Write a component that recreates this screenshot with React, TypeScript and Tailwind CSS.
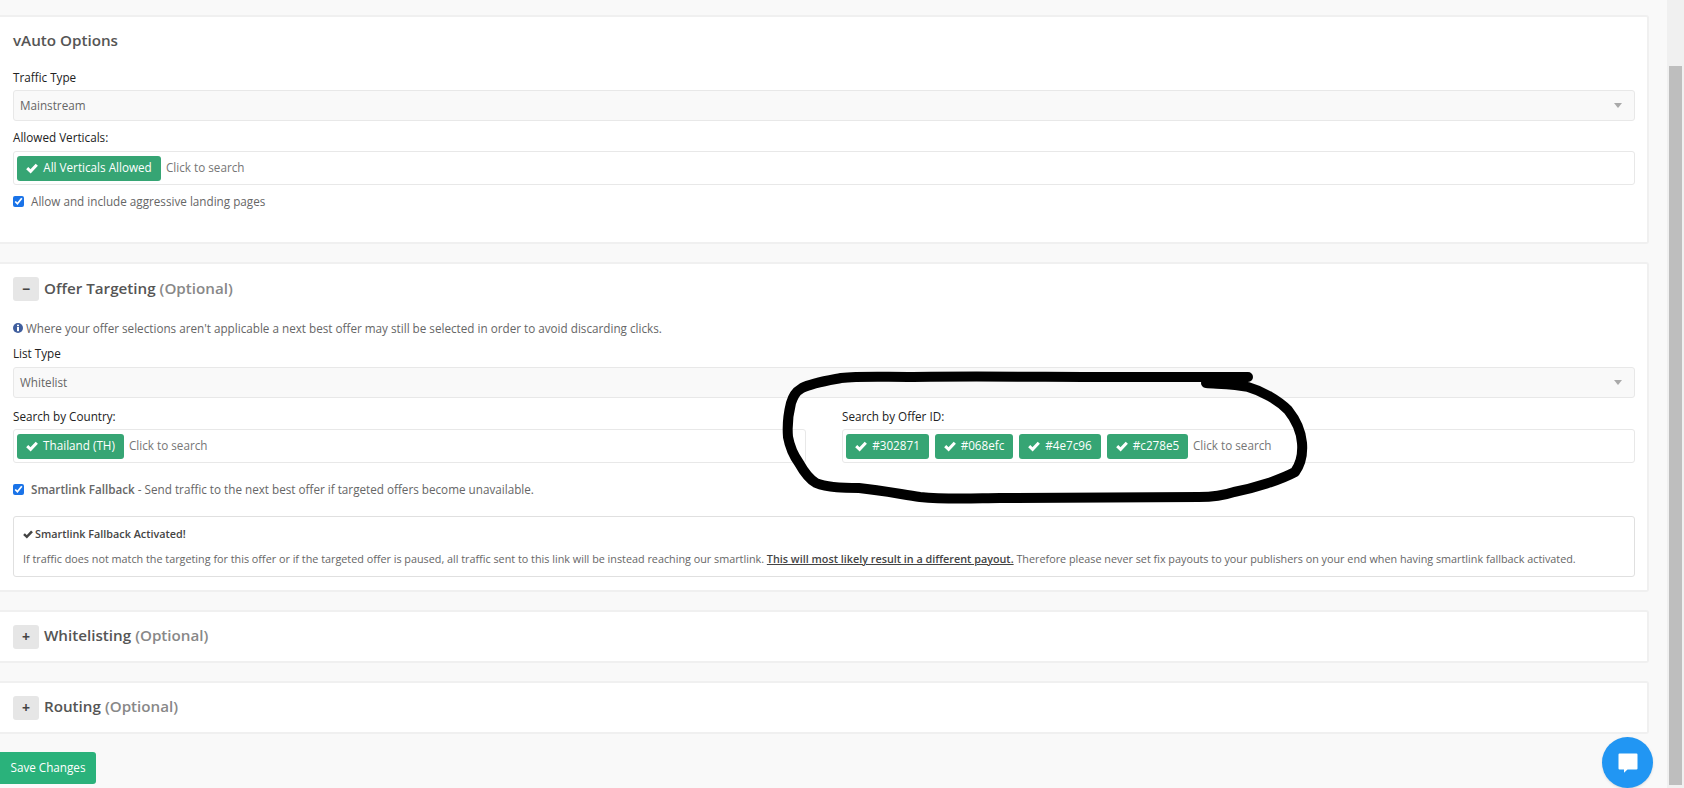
const font = "font-['Open_Sans',sans-serif]";

function Check({ className = 'w-[12px] h-[12px]' }: { className?: string }) {
  return (
    <svg viewBox="0 0 12 12" className={`${className} shrink-0`} fill="none" stroke="currentColor" strokeWidth="3">
      <path d="M1.2 6.2 4.6 9.4 10.8 2.8" />
    </svg>
  );
}

function Tag({ label, width }: { label: string; width: string }) {
  return (
    <span className={`flex h-[25px] items-center justify-center gap-[5px] rounded-[3px] bg-[#36a574] text-[11.7px] text-white ${width}`}>
      <Check />
      {label}
    </span>
  );
}

function TagBox({ tags }: { tags: { label: string; width: string }[] }) {
  return (
    <div className="flex h-[34px] items-center gap-[6px] rounded-[3px] border border-[#e8e8e8] bg-white px-[3px]">
      {tags.map((tag) => (
        <Tag key={tag.label} {...tag} />
      ))}
      <span className="ml-[-1px] text-[11.7px] text-[#767676]">Click to search</span>
    </div>
  );
}

function SelectBox({ value }: { value: string }) {
  return (
    <div className="flex h-[31px] items-center justify-between rounded-[3px] border border-[#e8e8e8] bg-[#f9f9f9] pl-[6px] pr-[12px] text-[11.7px] text-[#666666]">
      {value}
      <span className="h-0 w-0 border-x-[4px] border-t-[5px] border-x-transparent border-t-[#aaaaaa]" />
    </div>
  );
}

function Card({ children, className = '' }: { children: React.ReactNode; className?: string }) {
  return <section className={`rounded-r-[3px] border-y-2 border-r-2 border-[#f0f0f0] bg-white ${className}`}>{children}</section>;
}

function CollapsedCard({ title }: { title: string }) {
  return (
    <Card className="flex h-[53px] items-center pl-[13px]">
      <span className="flex h-6 w-[26px] items-center justify-center rounded-[3px] bg-[#e6e6e6] text-sm font-bold text-[#444444]">+</span>
      <h2 className="mt-[-2px] ml-[5px] text-[15.2px] font-semibold text-[#555555]">
        {title} <span className="font-semibold text-[#888888]">(Optional)</span>
      </h2>
    </Card>
  );
}

export default function App() {
  return (
    <div className={`relative flex h-[788px] w-[1684px] overflow-hidden bg-[#f9f9f9] ${font}`}>
      <main className="w-[1667px] pt-[15px]">
        <div className="flex w-[1649px] flex-col gap-[18px]">
          <Card className="h-[229px] pl-[13px] pr-[12px] pt-[13px]">
            <h2 className="text-[15.2px] leading-5 font-semibold text-[#555555]">vAuto Options</h2>
            <label className="mt-[18px] mb-[4px] block text-[11.7px] leading-[18px] text-[#222222]">Traffic Type</label>
            <SelectBox value="Mainstream" />
            <label className="mt-[7px] mb-[5px] block text-[11.7px] leading-[18px] text-[#222222]">Allowed Verticals:</label>
            <TagBox tags={[{ label: 'All Verticals Allowed', width: 'w-[144px]' }]} />
            <div className="mt-[8px] flex items-center gap-[7px] text-[11.7px] text-[#666666]">
              <input type="checkbox" defaultChecked className="m-0 h-[11px] w-[11px] accent-[#1a73e8]" />
              Allow and include aggressive landing pages
            </div>
          </Card>

          <Card className="h-[330px] pl-[13px] pr-[12px] pt-[13px]">
            <div className="flex items-center">
              <span className="flex h-6 w-[26px] items-center justify-center rounded-[3px] bg-[#e6e6e6] text-sm font-bold text-[#444444]">−</span>
              <h2 className="mt-[-2px] ml-[5px] text-[15.2px] font-semibold text-[#555555]">
                Offer Targeting <span className="font-semibold text-[#888888]">(Optional)</span>
              </h2>
            </div>
            <p className="mt-[19px] flex items-center gap-[3px] text-[11.7px] leading-4 text-[#666666]">
              <svg viewBox="0 0 10 10" className="h-[10px] w-[10px]">
                <circle cx="5" cy="5" r="5" fill="#3f5e9e" />
                <rect x="4" y="4" width="2" height="4.2" fill="#fff" />
                <rect x="4" y="1.7" width="2" height="1.5" fill="#fff" />
              </svg>
              Where your offer selections aren't applicable a next best offer may still be selected in order to avoid discarding clicks.
            </p>
            <label className="mt-[8px] mb-[5px] block text-[11.7px] leading-[18px] text-[#222222]">List Type</label>
            <SelectBox value="Whitelist" />
            <div className="mt-[9px] grid grid-cols-2 gap-[36px]">
              <div>
                <label className="mb-[4px] block text-[11.7px] leading-[18px] text-[#222222]">Search by Country:</label>
                <TagBox tags={[{ label: 'Thailand (TH)', width: 'w-[107px]' }]} />
              </div>
              <div>
                <label className="mb-[4px] block text-[11.7px] leading-[18px] text-[#222222]">Search by Offer ID:</label>
                <TagBox
                  tags={[
                    { label: '#302871', width: 'w-[83px]' },
                    { label: '#068efc', width: 'w-[78px]' },
                    { label: '#4e7c96', width: 'w-[82px]' },
                    { label: '#c278e5', width: 'w-[81px]' },
                  ]}
                />
              </div>
            </div>
            <div className="mt-[18px] flex items-center gap-[7px] text-[11.7px] text-[#666666]">
              <input type="checkbox" defaultChecked className="m-0 h-[11px] w-[11px] accent-[#1a73e8]" />
              <span>
                <span className="font-semibold">Smartlink Fallback</span> - Send traffic to the next best offer if targeted offers become unavailable.
              </span>
            </div>
            <div className="mt-[17px] h-[61px] rounded-[3px] border border-[#e0e0e0] bg-white px-[9px] pt-[9px] text-[10.8px] leading-4 text-[#666666]">
              <p className="flex items-center gap-[2px] font-semibold text-[#444444]">
                <Check className="h-[10px] w-[10px]" />
                Smartlink Fallback Activated!
              </p>
              <p className="mt-[9px] whitespace-nowrap">
                If traffic does not match the targeting for this offer or if the targeted offer is paused, all traffic sent to this link will be instead reaching our smartlink.{' '}
                <span className="font-semibold text-[#444444] underline">This will most likely result in a different payout.</span> Therefore please never set fix payouts to your publishers on your end when having smartlink fallback activated.
              </p>
            </div>
          </Card>

          <CollapsedCard title="Whitelisting" />
          <CollapsedCard title="Routing" />
        </div>
        <button className="mt-[18px] h-[32px] w-[96px] rounded-r-[3px] bg-[#2ab27b] text-[11.7px] text-white">Save Changes</button>
      </main>

      {/* scrollbar */}
      <div className="w-[17px] bg-[#f0f0f0] pt-[66px] pl-[2px]">
        <div className="h-[719px] w-[13px] bg-[#bebebe]" />
      </div>

      {/* chat bubble */}
      <button className="absolute top-[737px] left-[1602px] flex h-[51px] w-[51px] items-center justify-center rounded-full bg-[#2196f3] shadow-sm">
        <svg viewBox="0 0 20 20" className="h-[20px] w-[20px]" fill="#fff">
          <path d="M1.5 0.5h17a1 1 0 0 1 1 1v14a1 1 0 0 1-1 1H9.5l-3.5 3.2v-3.2H1.5a1 1 0 0 1-1-1v-14a1 1 0 0 1 1-1z" />
        </svg>
      </button>

      {/* hand-drawn annotation over the offer field */}
      <svg className="pointer-events-none absolute inset-0" width="1684" height="788" fill="none" stroke="#000" strokeWidth="10" strokeLinecap="round" strokeLinejoin="round">
        <path d="M1248 377L1127 377C1050 377 960 376 913 377C880 377 860 376 841 378C825 381 812 383 802 388C795 392 793 397 791 403C788 415 787 425 788 437C790 448 794 456 799 463C804 472 809 479 816 483C828 488 845 488 859 488C880 490 900 494 920 497C950 500 980 498 1000 498L1199 497C1215 497 1225 495 1234 492C1255 488 1280 480 1295 472C1300 465 1303 455 1302 443C1301 430 1296 420 1288 410C1278 400 1262 391 1248 387C1235 384 1220 384 1206 383" />
        <path d="M1208 381L1244 381" strokeWidth="8" />
      </svg>
    </div>
  );
}
